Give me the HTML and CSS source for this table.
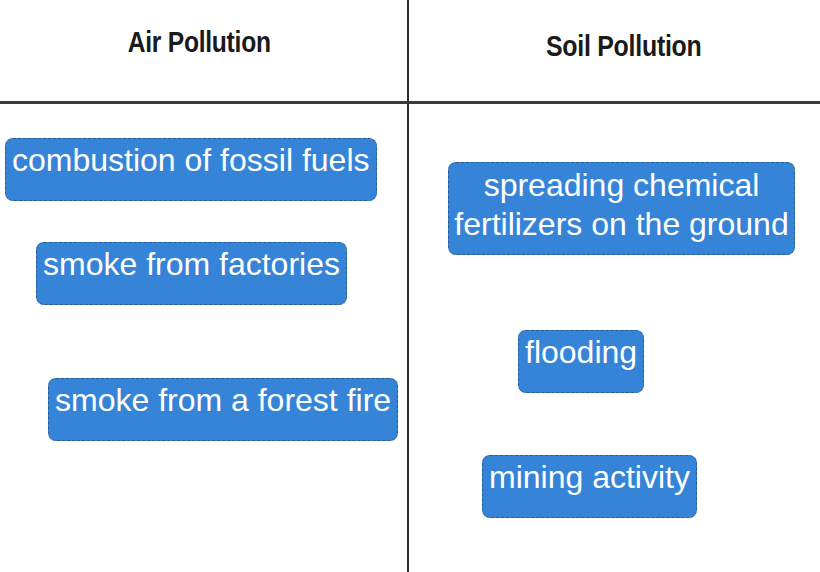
FILE: index.html
```html
<!DOCTYPE html>
<html>
<head>
<meta charset="utf-8">
<link rel="stylesheet" href="styles.css">
</head>
<body>
<div class="board">
  <div class="head head-left"><span class="title">Air Pollution</span></div>
  <div class="head head-right"><span class="title title-soil">Soil Pollution</span></div>
  <div class="cell cell-left">
    <div class="chip chip-a">combustion of fossil fuels</div>
    <div class="chip chip-b">smoke from factories</div>
    <div class="chip chip-c">smoke from a forest fire</div>
  </div>
  <div class="cell cell-right">
    <div class="chip chip-d">spreading chemical fertilizers on the ground</div>
    <div class="chip chip-e">flooding</div>
    <div class="chip chip-f">mining activity</div>
  </div>
</div>
</body>
</html>
```
FILE: styles.css
```css
html, body {
  margin: 0;
  padding: 0;
  background: #ffffff;
}
.board {
  width: 820px;
  height: 572px;
  display: grid;
  grid-template-columns: 409px 411px;
  grid-template-rows: 104px 468px;
  overflow: hidden;
}
.head {
  border-bottom: 3px solid #3a3a3a;
  display: flex;
  justify-content: center;
  align-items: flex-start;
}
.head-left {
  border-right: 2px solid #2c2c2c;
  padding-top: 23px;
  padding-right: 9px;
}
.head-right {
  padding-top: 27px;
  padding-left: 18px;
}
.title {
  display: inline-block;
  font-family: "Liberation Sans Narrow", "Liberation Sans", Arial, sans-serif;
  font-weight: bold;
  font-size: 30px;
  color: #1a1a1a;
  line-height: 38px;
  letter-spacing: -0.3px;
  transform: scaleX(0.82);
}
.title-soil {
  transform: scaleX(0.83);
}
.cell {
  position: relative;
}
.cell-left {
  border-right: 2px solid #2c2c2c;
}
.chip {
  position: absolute;
  box-sizing: border-box;
  min-height: 63px;
  padding: 2px 6px 0;
  background: #3584d8;
  border: 1px dashed #2a5c93;
  border-radius: 8px;
  color: #ffffff;
  font-family: "Liberation Sans", Arial, sans-serif;
  font-size: 32px;
  line-height: 39px;
  white-space: nowrap;
}
.chip-a { left: 5px; top: 34px; }
.chip-b { left: 36px; top: 138px; }
.chip-c { left: 48px; top: 274px; }
.chip-d {
  left: 39px;
  top: 58px;
  width: 347px;
  min-height: 93px;
  text-align: center;
  white-space: normal;
  padding: 3px 2px 0;
}
.chip-e { left: 109px; top: 226px; }
.chip-f { left: 73px; top: 351px; }
```
